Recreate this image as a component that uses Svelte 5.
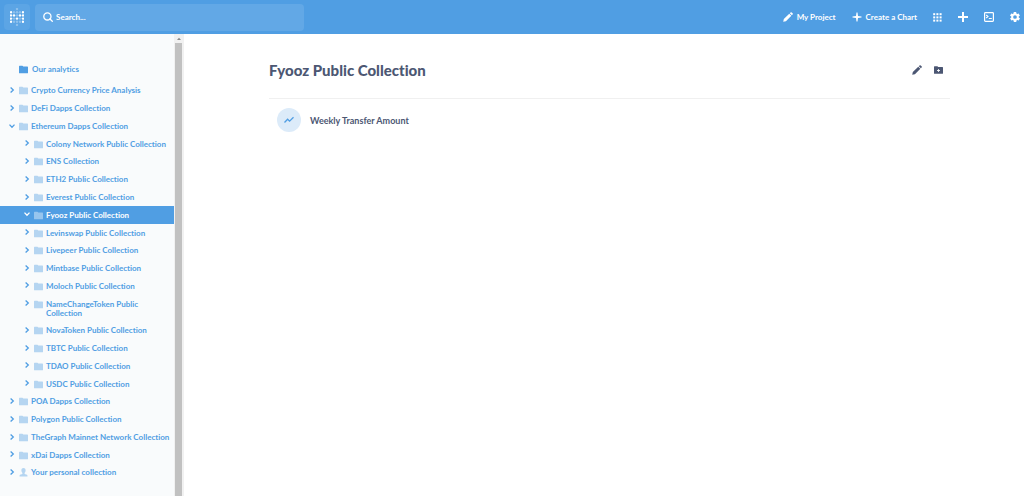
<script>
  const rows = [
    { name: 'Crypto Currency Price Analysis', level: 1 },
    { name: 'DeFi Dapps Collection', level: 1 },
    { name: 'Ethereum Dapps Collection', level: 1, open: true },
    { name: 'Colony Network Public Collection', level: 2 },
    { name: 'ENS Collection', level: 2 },
    { name: 'ETH2 Public Collection', level: 2 },
    { name: 'Everest Public Collection', level: 2 },
    { name: 'Fyooz Public Collection', level: 2, open: true, selected: true },
    { name: 'Levinswap Public Collection', level: 2 },
    { name: 'Livepeer Public Collection', level: 2 },
    { name: 'Mintbase Public Collection', level: 2 },
    { name: 'Moloch Public Collection', level: 2 },
    { name: 'NameChangeToken Public Collection', level: 2 },
    { name: 'NovaToken Public Collection', level: 2 },
    { name: 'TBTC Public Collection', level: 2 },
    { name: 'TDAO Public Collection', level: 2 },
    { name: 'USDC Public Collection', level: 2 },
    { name: 'POA Dapps Collection', level: 1 },
    { name: 'Polygon Public Collection', level: 1 },
    { name: 'TheGraph Mainnet Network Collection', level: 1 },
    { name: 'xDai Dapps Collection', level: 1 },
    { name: 'Your personal collection', level: 1, personal: true }
  ];

  // Dot opacity for each cell of the logo grid
  const logo = [
    [0, 0, 0.3, 0, 0],
    [1, 0.3, 0.3, 0.3, 1],
    [1, 1, 0.3, 1, 1],
    [1, 0.3, 1, 0.3, 1],
    [1, 0.3, 0.3, 0.3, 1],
    [0, 0, 0.3, 0, 0]
  ];
</script>

{#snippet folder()}
  <svg class="folder" viewBox="0 0 9 8" aria-hidden="true">
    <path d="M0 1Q0 .2.6.2H3.4L4.3 1.1H8.4Q9 1.1 9 1.7V7.2Q9 7.8 8.4 7.8H.6Q0 7.8 0 7.2Z" />
  </svg>
{/snippet}

{#snippet pencil()}
  <svg class="pencil" viewBox="0 0 24 24" aria-hidden="true">
    <path d="M.5 23.500 2 17 15 4 20 9 7 22ZM16.300 2.700 18 1Q19.500-.3 21 1L23 3Q24.300 4.500 23 6L21.300 7.700Z" />
  </svg>
{/snippet}

<div class="page">
  <header>
    <a class="logo" href="#home" aria-label="Home">
      <svg viewBox="0 0 14 18" aria-hidden="true">
        {#each logo as line, y}
          {#each line as opacity, x}
            <circle cx={1 + x * 3} cy={1 + y * 3.2} r="1.2" {opacity} />
          {/each}
        {/each}
      </svg>
    </a>
    <label class="search">
      <svg viewBox="0 0 10 10" aria-hidden="true">
        <circle cx="4.4" cy="4.4" r="3.6" />
        <path d="M7 7 9.300 9.300" />
      </svg>
      <input type="text" placeholder="Search..." aria-label="Search" />
    </label>
    <nav>
      <a href="#project">{@render pencil()}My Project</a>
      <a href="#chart">
        <svg viewBox="0 0 10 10" aria-hidden="true"><path d="M5 .5 6 4 9.500 5 6 6 5 9.500 4 6 .5 5 4 4Z" /><path d="M4.500.5H5.500V4.500H9.500V5.500H5.500V9.500H4.500V5.500H.5V4.500H4.500Z" /></svg>
        Create a Chart
      </a>
      <button aria-label="Browse data">
        <svg class="grid" viewBox="0 0 9 9" aria-hidden="true">
          {#each [0.2, 3.4, 6.6] as y}
            {#each [0.2, 3.4, 6.6] as x}
              <rect {x} {y} width="2" height="2" />
            {/each}
          {/each}
        </svg>
      </button>
      <button aria-label="New">
        <svg viewBox="0 0 10 10" aria-hidden="true"><path d="M4 0H6V4H10V6H6V10H4V6H0V4H4Z" /></svg>
      </button>
      <button aria-label="Write SQL">
        <svg class="line" viewBox="0 0 10 10" aria-hidden="true">
          <rect x=".6" y=".6" width="8.800" height="8.800" rx=".8" />
          <path d="M2.200 3 3.900 4.500 2.200 6M4.800 6.500H7.800" />
        </svg>
      </button>
      <button aria-label="Settings">
        <svg viewBox="2 2 20 20" aria-hidden="true">
          <path d="M19.4 13c0-.3.1-.6.1-1s0-.7-.1-1l2.1-1.6c.2-.2.2-.4.1-.6l-2-3.5c-.1-.2-.4-.3-.6-.2l-2.500 1c-.5-.4-1.100-.7-1.700-1l-.4-2.600c0-.3-.2-.5-.5-.5h-4c-.2 0-.4.2-.5.400l-.4 2.700c-.6.200-1.100.600-1.700 1l-2.500-1c-.2-.1-.5 0-.6.200l-2 3.500c-.1.200 0 .5.100.6L4.600 11c0 .3-.1.600-.1 1s0 .7.100 1l-2.100 1.600c-.2.200-.2.400-.1.600l2 3.500c.1.200.4.300.6.200l2.500-1c.5.400 1.100.7 1.700 1l.4 2.600c0 .3.200.5.500.5h4c.2 0 .5-.2.500-.500l.4-2.600c.6-.3 1.200-.6 1.700-1l2.500 1c.2.100.5 0 .6-.2l2-3.500c.1-.2.1-.5-.1-.6L19.400 13ZM12 15.700a3.700 3.700 0 1 1 0-7.400 3.700 3.700 0 0 1 0 7.400Z" />
        </svg>
      </button>
    </nav>
  </header>

  <div class="body">
    <aside>
      <div class="collections">
        <a class="root" href="#root">{@render folder()}Our analytics</a>
        <ul>
          {#each rows as row}
            <li class:nested={row.level === 2} class:selected={row.selected}>
              <button class="toggle" aria-label="Toggle {row.name}" aria-expanded={!!row.open}>
                <svg class:open={row.open} viewBox="0 0 6 6" aria-hidden="true"><path d="M1.600.5 4.300 3 1.600 5.500" /></svg>
              </button>
              <a href="#collection" aria-current={row.selected ? 'page' : undefined}>
                {#if row.personal}
                  <svg class="folder" viewBox="0 0 9 9" aria-hidden="true">
                    <path d="M4.500 0C6 0 6.700 1 6.600 2.400 6.500 3.700 5.900 4.500 5.600 4.900V6L8 6.800Q8.500 7 8.500 8.600H.5Q.5 7 1 6.800L3.400 6V4.900C3.100 4.500 2.500 3.700 2.400 2.400 2.300 1 3 0 4.500 0Z" />
                  </svg>
                {:else}
                  {@render folder()}
                {/if}
                <span>{row.name}</span>
              </a>
            </li>
          {/each}
        </ul>
      </div>
      <div class="scrollbar" aria-hidden="true">
        <svg viewBox="0 0 9 9"><path d="M2.500 6 4.500 3.800 6.500 6Z" /></svg>
        <div class="thumb"></div>
      </div>
    </aside>

    <main>
      <div class="heading">
        <h1>Fyooz Public Collection</h1>
        <button aria-label="Edit collection">{@render pencil()}</button>
        <button aria-label="New collection">
          <svg class="add" viewBox="0 0 9 8" aria-hidden="true">
            <path fill-rule="evenodd" d="M0 .8Q0 .2.600.2H3.400L4.200 1H8.400Q9 1 9 1.600V7.200Q9 7.800 8.400 7.800H.6Q0 7.800 0 7.200ZM4.100 3.100V4.100H3.100V4.900H4.100V5.900H4.900V4.900H5.900V4.100H4.900V3.100Z" />
          </svg>
        </button>
      </div>
      <a class="item" href="#question">
        <span class="badge">
          <svg viewBox="0 0 10 8" aria-hidden="true"><path d="M.5 6.500 3.600 3.200 5.600 5.200 9.500 1.300" /></svg>
        </span>
        Weekly Transfer Amount
      </a>
    </main>
  </div>
</div>

<style>
  :global(body) {
    margin: 0;
    background: #fff;
  }
  .page {
    display: flex;
    flex-direction: column;
    min-height: 100vh;
    font: 700 8px/9px Lato, sans-serif;
    font-variant-ligatures: none;
    color: #4c5773;
  }
  a {
    color: inherit;
    text-decoration: none;
  }
  button {
    display: flex;
    padding: 0;
    border: 0;
    background: none;
    color: inherit;
    cursor: pointer;
  }
  svg {
    display: block;
    flex: none;
    width: 10px;
    height: 10px;
    fill: currentColor;
  }
  header {
    display: flex;
    align-items: center;
    gap: 5px;
    box-sizing: border-box;
    height: 34px;
    padding: 0 4px;
    background: #509ee3;
    color: #fff;
  }
  .logo {
    display: grid;
    place-items: center;
    width: 26px;
    height: 26px;
    border-radius: 4px;
    background: #5ca5e5;
  }
  .logo svg {
    width: 14px;
    height: 18px;
  }
  .search {
    display: flex;
    align-items: center;
    gap: 3px;
    box-sizing: border-box;
    flex: 0 1 269px;
    height: 27px;
    padding: 0 8px;
    border-radius: 4px;
    background: #62a8e6;
  }
  .search svg {
    fill: none;
    stroke: #fff;
    stroke-width: 1.3;
    stroke-linecap: round;
  }
  input {
    flex: 1;
    min-width: 0;
    padding: 0;
    border: 0;
    outline: 0;
    background: none;
    color: #fff;
    font: inherit;
  }
  input::placeholder {
    color: #fff;
    opacity: 1;
  }
  nav {
    display: flex;
    align-items: center;
    gap: 16px;
    margin-left: auto;
  }
  nav a {
    display: flex;
    align-items: center;
    gap: 4px;
  }
  nav .grid {
    width: 9px;
    height: 9px;
  }
  .line {
    fill: none;
    stroke: currentColor;
    stroke-width: 1.2;
  }
  .body {
    display: flex;
    flex: 1;
  }
  aside {
    display: flex;
    flex: none;
    width: 184px;
    background: #f9fbfc;
    color: #509ee3;
  }
  .collections {
    display: flex;
    flex-direction: column;
    flex: 1;
    padding: 31px 0 14px;
  }
  .root {
    display: flex;
    align-items: center;
    gap: 4px;
    padding: 0 19px 8px;
  }
  .folder {
    width: 9px;
    height: 9px;
  }
  ul {
    display: flex;
    flex-direction: column;
    flex: 1;
    margin: 0;
    padding: 0;
    list-style: none;
  }
  li {
    display: flex;
    align-items: center;
    flex: 1 0 auto;
    gap: 4px;
    padding: 4px 2px 4px 9px;
  }
  li.nested {
    padding-left: 24px;
  }
  li a {
    display: flex;
    gap: 3px;
  }
  li .folder {
    opacity: 0.4;
  }
  li.selected {
    background: #509ee3;
    color: #fff;
  }
  .toggle {
    align-self: flex-start;
    padding: 1px 0;
  }
  .toggle svg {
    width: 6px;
    height: 6px;
    fill: none;
    stroke: currentColor;
    stroke-width: 1.3;
  }
  .toggle .open {
    transform: rotate(90deg);
  }
  .scrollbar {
    display: flex;
    flex-direction: column;
    width: 10px;
    background: #f1f1f1;
  }
  .scrollbar svg {
    width: 10px;
    height: 9px;
    fill: #8a8a8a;
  }
  .thumb {
    flex: 1;
    margin: 0 2px 0 1px;
    background: #c1c1c1;
  }
  main {
    flex: 1;
    padding: 26px 74px 0 85px;
  }
  .heading {
    display: flex;
    align-items: center;
    gap: 12px;
    padding: 0 7px 18px 0;
    border-bottom: 1px solid #f0f0f0;
  }
  h1 {
    flex: 1;
    margin: 0;
    font-size: 15px;
    font-weight: 900;
    line-height: 20px;
  }
  .heading .add {
    width: 9px;
    height: 8px;
  }
  .item {
    display: flex;
    align-items: center;
    gap: 9px;
    padding: 9px 8px;
    font-size: 9px;
  }
  .badge {
    display: grid;
    place-items: center;
    width: 24px;
    height: 24px;
    border-radius: 50%;
    background: #dcebf9;
    color: #509ee3;
  }
  .badge svg {
    fill: none;
    stroke: currentColor;
    stroke-width: 1.3;
  }
</style>
